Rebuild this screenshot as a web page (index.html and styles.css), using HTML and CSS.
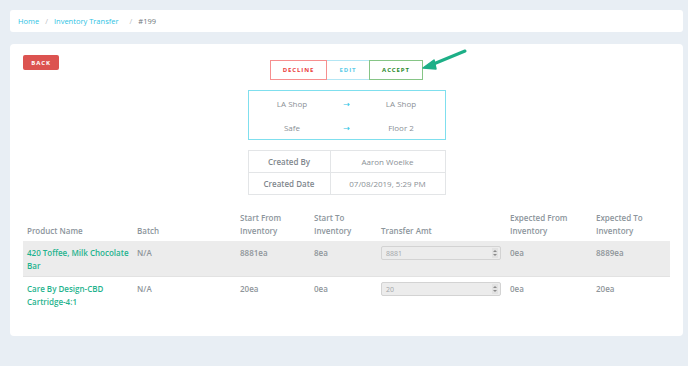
FILE: index.html
```html
<!DOCTYPE html>
<html lang="en">
<head>
    <meta charset="UTF-8">
    <meta name="viewport" content="width=device-width, initial-scale=1.0">
    <title>Inventory Transfer #199</title>
    <link rel="stylesheet" href="styles.css">
</head>
<body>
    <nav class="crumbs">
        <a href="#">Home</a>
        <span class="sep">/</span>
        <a href="#">Inventory Transfer</a>
        <span class="sep wide">/</span>
        <span class="current">#199</span>
    </nav>

    <main class="card">
        <div class="top-row">
            <button class="btn-back">BACK</button>
            <div class="btn-group">
                <button class="btn-outline decline">DECLINE</button>
                <button class="btn-outline edit">EDIT</button>
                <button class="btn-outline accept">ACCEPT</button>
            </div>
            <svg class="pointer" width="50" height="26" viewBox="0 0 50 26">
                <path d="M44 3 L10 17" stroke="#1daf87" stroke-width="3" stroke-linecap="round" fill="none"/>
                <path d="M2 20 L13 12 L15 21 Z" fill="#1daf87" stroke="#1daf87" stroke-width="1.5" stroke-linejoin="round"/>
            </svg>
        </div>

        <div class="route">
            <span>LA Shop</span><span class="arrow">&rarr;</span><span>LA Shop</span>
            <span>Safe</span><span class="arrow">&rarr;</span><span>Floor 2</span>
        </div>

        <table class="meta">
            <tr><th>Created By</th><td>Aaron Woelke</td></tr>
            <tr><th>Created Date</th><td>07/08/2019, 5:29 PM</td></tr>
        </table>

        <table class="items">
            <colgroup>
                <col style="width:110px">
                <col style="width:103px">
                <col style="width:74px">
                <col style="width:67px">
                <col style="width:129px">
                <col style="width:86px">
                <col style="width:78px">
            </colgroup>
            <thead>
                <tr>
                    <th>Product Name</th>
                    <th>Batch</th>
                    <th>Start From<br>Inventory</th>
                    <th>Start To<br>Inventory</th>
                    <th>Transfer Amt</th>
                    <th>Expected From<br>Inventory</th>
                    <th>Expected To<br>Inventory</th>
                </tr>
            </thead>
            <tbody>
                <tr class="shaded">
                    <td class="product">420 Toffee, Milk Chocolate Bar</td>
                    <td>N/A</td>
                    <td>8881ea</td>
                    <td>8ea</td>
                    <td><div class="qty"><span>8881</span><i class="spin"></i></div></td>
                    <td>0ea</td>
                    <td>8889ea</td>
                </tr>
                <tr>
                    <td class="product">Care By Design-CBD Cartridge-4:1</td>
                    <td>N/A</td>
                    <td>20ea</td>
                    <td>0ea</td>
                    <td><div class="qty"><span>20</span><i class="spin"></i></div></td>
                    <td>0ea</td>
                    <td>20ea</td>
                </tr>
            </tbody>
        </table>
    </main>
</body>
</html>
```

FILE: styles.css
```css
:root {
    --page-bg: #e8eef4;
    --cyan: #2ec3e4;
    --green: #1fb38e;
    --text: #8a9096;
    --label: #7f878d;
    --line: #e3e5e7;
}

body {
    font-family: 'Open Sans', 'DejaVu Sans', sans-serif;
    font-size: 8px;
    margin: 0;
    padding: 10px 5px 0 10px;
    background-color: var(--page-bg);
    color: var(--text);
}

.crumbs {
    background-color: white;
    border-radius: 3px;
    height: 22px;
    padding: 0 8px;
    display: flex;
    align-items: center;
    gap: 6px;
    font-size: 7.5px;
}

.crumbs a {
    color: var(--cyan);
    text-decoration: none;
}

.crumbs .sep {
    color: #b9bec2;
}

.crumbs .sep.wide {
    margin-left: 5px;
}

.crumbs .current {
    color: #6f767b;
}

.card {
    position: relative;
    margin-top: 12px;
    background-color: white;
    border-radius: 4px;
    padding: 11px 13px 24px;
    display: flex;
    flex-direction: column;
    align-items: center;
}

.top-row {
    align-self: stretch;
    display: grid;
    grid-template-columns: 1fr auto 1fr;
    align-items: start;
}

button {
    font-family: inherit;
    font-weight: 700;
    font-size: 6px;
    letter-spacing: 0.9px;
    cursor: pointer;
    background: white;
}

.btn-back {
    justify-self: start;
    width: 36px;
    height: 15px;
    padding: 0;
    background-color: #dc5350;
    color: white;
    border: none;
    border-radius: 2px;
}

.btn-group {
    display: flex;
    margin-top: 5px;
}

.btn-outline {
    height: 20px;
    padding: 0;
    border: 1px solid;
}

.decline {
    width: 57px;
    color: #ea3b3b;
    border-color: #f68f8f;
}

.edit {
    width: 42px;
    color: #5ccbe8;
    border-color: #b3e6f4;
    border-left: none;
    border-right: none;
}

.accept {
    width: 54px;
    color: #2a8a2a;
    border-color: #86c586;
}

.pointer {
    position: absolute;
    left: 411px;
    top: 4px;
}

.route {
    margin-top: 10px;
    width: 196px;
    height: 48px;
    border: 1px solid #7fdfee;
    display: grid;
    grid-template-columns: 1fr 22px 1fr;
    grid-template-rows: 1fr 1fr;
    align-items: center;
    text-align: center;
}

.route .arrow {
    color: var(--cyan);
}

.meta {
    margin-top: 10px;
    width: 198px;
    border-collapse: collapse;
}

.meta th,
.meta td {
    border: 1px solid var(--line);
    height: 21px;
    padding: 0;
    text-align: center;
}

.meta th {
    width: 81px;
    font-weight: 600;
    color: var(--label);
}

.items {
    margin-top: 16px;
    align-self: stretch;
    table-layout: fixed;
    border-collapse: collapse;
    line-height: 13px;
}

.items th {
    text-align: left;
    vertical-align: bottom;
    font-weight: 600;
    color: #8c959c;
    padding: 0 4px 4px;
}

.items td {
    vertical-align: top;
    font-weight: 600;
    color: #8e959a;
    padding: 5px 4px 4px;
}

.items tr.shaded td {
    background-color: #ececec;
}

.items tbody tr + tr td {
    border-top: 1px solid #e2e2e2;
}

.items td.product {
    color: var(--green);
}

.qty {
    box-sizing: border-box;
    width: 120px;
    height: 14px;
    background-color: #ececec;
    border: 1px solid #d3d3d3;
    border-radius: 2px;
    display: flex;
    align-items: center;
    justify-content: space-between;
    padding: 0 2px 0 4px;
    font-weight: 400;
    font-size: 7px;
    color: #a2a6a9;
}

.spin {
    width: 6px;
    height: 10px;
    background-color: #e2e2e2;
    position: relative;
}

.spin::before,
.spin::after {
    content: "";
    position: absolute;
    left: 1px;
    border-left: 2px solid transparent;
    border-right: 2px solid transparent;
}

.spin::before {
    top: 2px;
    border-bottom: 2px solid #8a8a8a;
}

.spin::after {
    bottom: 2px;
    border-top: 2px solid #8a8a8a;
}
```
